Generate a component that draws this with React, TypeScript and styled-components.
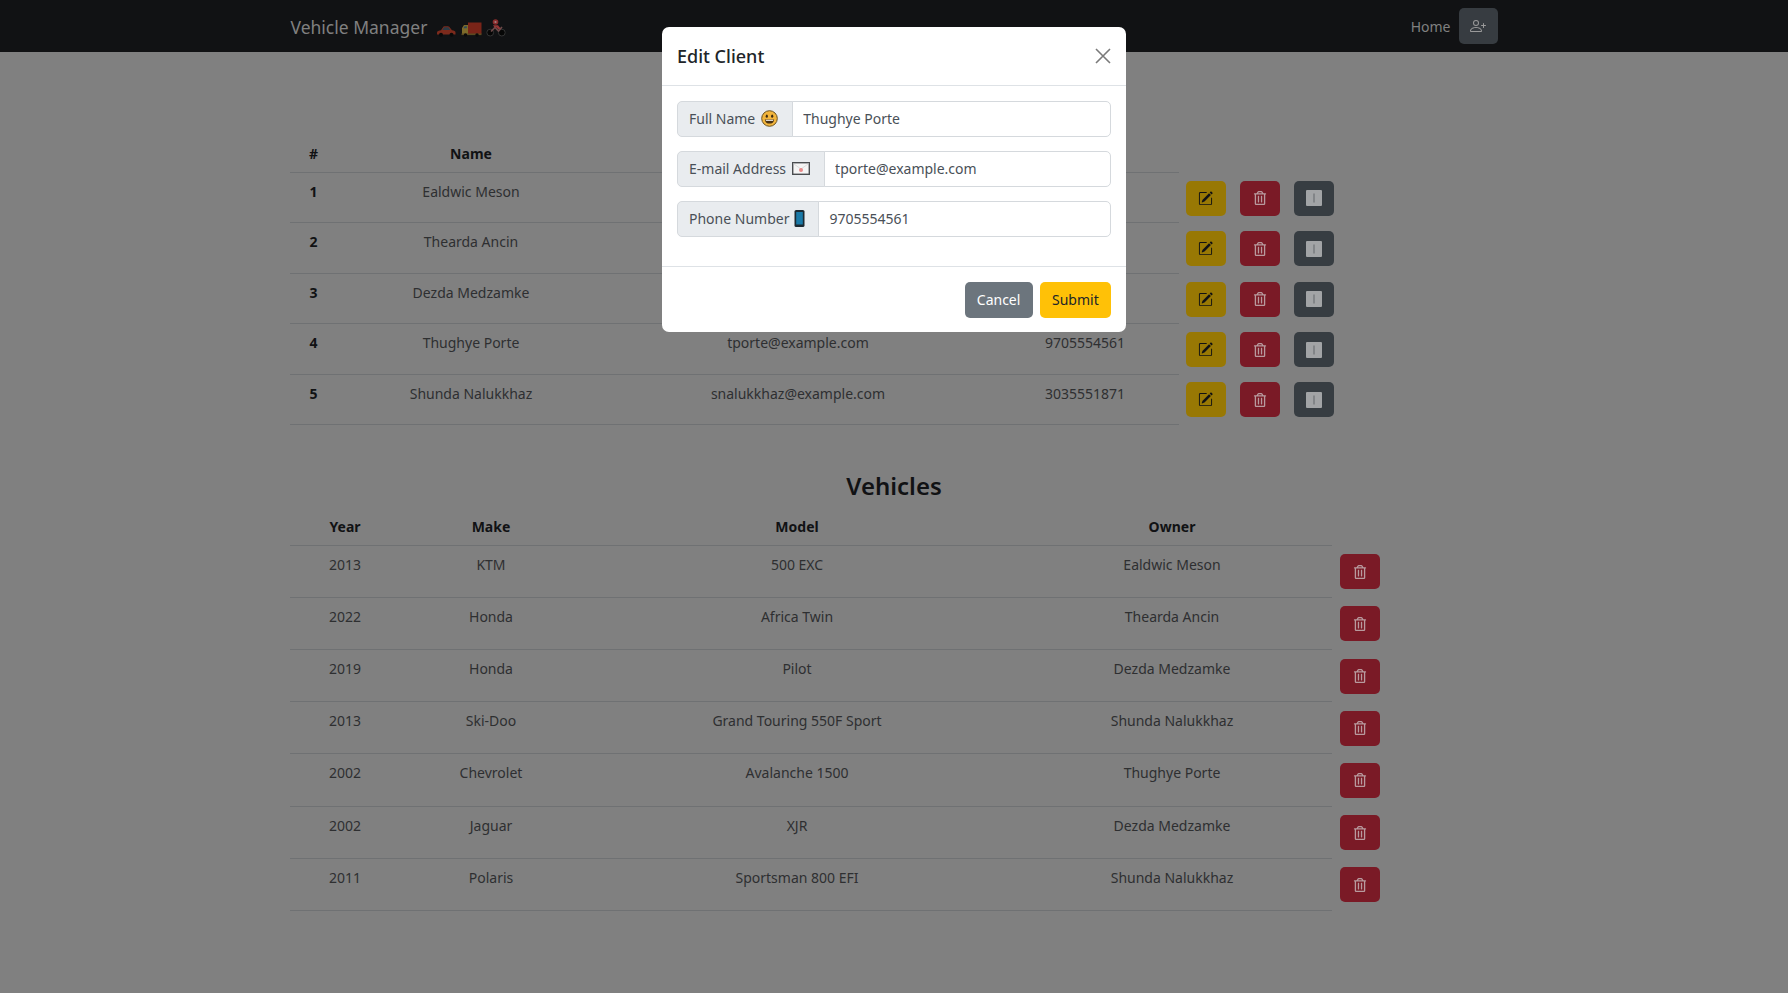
import { createGlobalStyle } from "styled-components"
import styled from "styled-components"
import { BsPencilSquare, BsPersonPlus } from "react-icons/bs"
import { FaRegTrashAlt } from "react-icons/fa"

type Client = { id: number; name: string; email: string; phone: string }
type Vehicle = { year: number; make: string; model: string; owner: string }

const clients: Client[] = [
    { id: 1, name: "Ealdwic Meson", email: "emeson@example.com", phone: "7205550147" },
    { id: 2, name: "Thearda Ancin", email: "tancin@example.com", phone: "3035552284" },
    { id: 3, name: "Dezda Medzamke", email: "dmedzamke@example.com", phone: "7195553390" },
    { id: 4, name: "Thughye Porte", email: "tporte@example.com", phone: "9705554561" },
    { id: 5, name: "Shunda Nalukkhaz", email: "snalukkhaz@example.com", phone: "3035551871" }
]

const vehicles: Vehicle[] = [
    { year: 2013, make: "KTM", model: "500 EXC", owner: "Ealdwic Meson" },
    { year: 2022, make: "Honda", model: "Africa Twin", owner: "Thearda Ancin" },
    { year: 2019, make: "Honda", model: "Pilot", owner: "Dezda Medzamke" },
    { year: 2013, make: "Ski-Doo", model: "Grand Touring 550F Sport", owner: "Shunda Nalukkhaz" },
    { year: 2002, make: "Chevrolet", model: "Avalanche 1500", owner: "Thughye Porte" },
    { year: 2002, make: "Jaguar", model: "XJR", owner: "Dezda Medzamke" },
    { year: 2011, make: "Polaris", model: "Sportsman 800 EFI", owner: "Shunda Nalukkhaz" }
]

const CarEmoji = () => (
    <EmojiSvg width="20" height="12" viewBox="0 0 20 12">
        <path d="M1 7.5C1 6 3 5.5 5 5.2L7.5 1.5C8 1 12 1 13 1.5L16 5.2C18 5.6 19.5 6 19.5 7.5V9.5H1Z" fill="#7c2a1c" />
        <path d="M8 2.2H12.4L14.4 5H6.4Z" fill="#2c3a44" />
        <circle cx="5" cy="9.7" r="2" fill="#0a0a0a" />
        <circle cx="15.5" cy="9.7" r="2" fill="#0a0a0a" />
    </EmojiSvg>
)

const TruckEmoji = () => (
    <EmojiSvg width="21" height="15" viewBox="0 0 21 15">
        <rect x="7" y="0.5" width="13.5" height="11.5" fill="#7a2418" />
        <path d="M1 6L3 3H7V12H1Z" fill="#7d6a2a" />
        <path d="M2.4 6.2L3.6 4.2H5.8V6.2Z" fill="#2f4c5c" />
        <rect x="0.5" y="11.5" width="20" height="1.6" fill="#5a4a20" />
        <circle cx="4.5" cy="13" r="1.7" fill="#0a0a0a" />
        <circle cx="16" cy="13" r="1.7" fill="#0a0a0a" />
    </EmojiSvg>
)

const BikeEmoji = () => (
    <EmojiSvg width="20" height="18" viewBox="0 0 20 18">
        <circle cx="4.2" cy="13.6" r="3.4" fill="#060606" stroke="#343434" strokeWidth="1" />
        <circle cx="15.8" cy="13.6" r="3.4" fill="#060606" stroke="#343434" strokeWidth="1" />
        <path d="M5 12.5L9 8.5L12.5 12L16 8" fill="none" stroke="#6e4a4a" strokeWidth="1.6" />
        <circle cx="9.5" cy="3" r="2.8" fill="#8a2c2c" />
        <circle cx="9.5" cy="3" r="1.1" fill="#a08080" />
        <path d="M7 6.2H12L14.6 9.6L12.4 10.4L10.6 8.4H8.6Z" fill="#963636" />
    </EmojiSvg>
)

const SmileEmoji = () => (
    <EmojiSvg width="17" height="17" viewBox="0 0 17 17">
        <circle cx="8.5" cy="8.5" r="7.8" fill="#f2b53c" stroke="#6b5320" strokeWidth="1" />
        <ellipse cx="5.8" cy="6.2" rx="1.1" ry="1.6" fill="#3d2c12" />
        <ellipse cx="11.2" cy="6.2" rx="1.1" ry="1.6" fill="#3d2c12" />
        <path d="M3.8 9.4H13.2C13 12.2 11 13.6 8.5 13.6C6 13.6 4 12.2 3.8 9.4Z" fill="#4a3312" />
        <path d="M4.8 9.8H12.2V10.8H4.8Z" fill="#fff" />
    </EmojiSvg>
)

const MailEmoji = () => (
    <EmojiSvg width="18" height="13" viewBox="0 0 18 13">
        <rect x="0.7" y="0.7" width="16.6" height="11.6" fill="#f4f4f4" stroke="#4a4d50" strokeWidth="1.4" />
        <path d="M1.4 1.6L9 7L16.6 1.6" fill="none" stroke="#d6d6d6" strokeWidth="0.8" />
        <circle cx="9" cy="8" r="2" fill="#e88a8a" />
    </EmojiSvg>
)

const PhoneEmoji = () => (
    <PhoneSvg width="11" height="17" viewBox="0 0 11 17">
        <rect x="0.5" y="0" width="10" height="17" rx="1.6" fill="#1c2a33" />
        <rect x="2.2" y="2" width="6.6" height="12.5" fill="#1a7aa8" />
    </PhoneSvg>
)

const PlusSquare = () => (
    <svg width="16" height="16" viewBox="0 0 16 16">
        <rect width="16" height="16" rx="1" fill="#a2a4a6" />
        <path d="M8 3.5V12.5" stroke="#63666a" strokeWidth="1" />
    </svg>
)

export default function App() {
    return (
        <>
            <GlobalStyle />
            <Navbar>
                <NavInner>
                    <Brand>
                        Vehicle Manager
                        <EmojiRow>
                            <CarEmoji />
                            <TruckEmoji />
                            <BikeEmoji />
                        </EmojiRow>
                    </Brand>
                    <NavEnd>
                        <NavLink>Home</NavLink>
                        <NavButton aria-label="Add client">
                            <BsPersonPlus size={16} />
                        </NavButton>
                    </NavEnd>
                </NavInner>
            </Navbar>

            <Page>
                <ClientsTable>
                    <colgroup>
                        <col width="47" />
                        <col width="268" />
                        <col width="386" />
                        <col width="188" />
                    </colgroup>
                    <thead>
                        <tr>
                            <Th>#</Th>
                            <Th>Name</Th>
                            <Th>E-mail</Th>
                            <Th>Phone</Th>
                        </tr>
                    </thead>
                    <tbody>
                        {clients.map((c) => (
                            <tr key={`client-${c.id}`}>
                                <IdCell>{c.id}</IdCell>
                                <Td>{c.name}</Td>
                                <Td>{c.email}</Td>
                                <Td>{c.phone}</Td>
                                <ActionCell $left={7} $top={1}>
                                    <ActionGroup>
                                        <IconButton $kind="warning" aria-label="Edit">
                                            <BsPencilSquare size={15} />
                                        </IconButton>
                                        <IconButton $kind="danger" aria-label="Delete">
                                            <FaRegTrashAlt size={14} />
                                        </IconButton>
                                        <IconButton $kind="dark" aria-label="Add vehicle">
                                            <PlusSquare />
                                        </IconButton>
                                    </ActionGroup>
                                </ActionCell>
                            </tr>
                        ))}
                    </tbody>
                </ClientsTable>

                <Title>Vehicles</Title>

                <VehiclesTable>
                    <colgroup>
                        <col width="110" />
                        <col width="182" />
                        <col width="430" />
                        <col width="320" />
                    </colgroup>
                    <thead>
                        <tr>
                            <Th>Year</Th>
                            <Th>Make</Th>
                            <Th>Model</Th>
                            <Th>Owner</Th>
                        </tr>
                    </thead>
                    <tbody>
                        {vehicles.map((v) => (
                            <tr key={`vehicle-${v.model}`}>
                                <Td>{v.year}</Td>
                                <Td>{v.make}</Td>
                                <Td>{v.model}</Td>
                                <Td>{v.owner}</Td>
                                <ActionCell $left={8} $top={1}>
                                    <IconButton $kind="danger" aria-label="Delete">
                                        <FaRegTrashAlt size={14} />
                                    </IconButton>
                                </ActionCell>
                            </tr>
                        ))}
                    </tbody>
                </VehiclesTable>
            </Page>

            <Modal>
                <ModalHeader>
                    <ModalTitle>Edit Client</ModalTitle>
                    <CloseButton aria-label="Close">
                        <svg width="16" height="16" viewBox="0 0 16 16">
                            <path d="M1 1L15 15M15 1L1 15" stroke="#7a7a7a" strokeWidth="1.6" />
                        </svg>
                    </CloseButton>
                </ModalHeader>
                <ModalBody>
                    <InputGroup>
                        <InputLabel>
                            Full Name <SmileEmoji />
                        </InputLabel>
                        <Input defaultValue="Thughye Porte" />
                    </InputGroup>
                    <InputGroup>
                        <InputLabel>
                            E-mail Address <MailEmoji />
                        </InputLabel>
                        <Input defaultValue="tporte@example.com" />
                    </InputGroup>
                    <InputGroup>
                        <InputLabel>
                            Phone Number <PhoneEmoji />
                        </InputLabel>
                        <Input defaultValue="9705554561" />
                    </InputGroup>
                </ModalBody>
                <ModalFooter>
                    <FooterButton $kind="secondary">Cancel</FooterButton>
                    <FooterButton $kind="warning">Submit</FooterButton>
                </ModalFooter>
            </Modal>
        </>
    )
}

const GlobalStyle = createGlobalStyle`
    * {
        box-sizing: border-box;
    }

    body {
        margin: 0;
        background-color: #808080;
        color: #111214;
        font-family: "Noto Sans", "Open Sans", sans-serif;
        font-size: 14px;
        line-height: 22px;
    }
`

const Navbar = styled.nav`
    height: 52px;
    background-color: #111214;
`

const NavInner = styled.div`
    display: flex;
    align-items: center;
    justify-content: space-between;
    width: 1207px;
    height: 100%;
    margin: 0 auto;
`

const Brand = styled.a`
    display: flex;
    align-items: center;
    gap: 9px;
    padding-top: 1px;
    color: #808080;
    font-size: 17.5px;
`

const EmojiRow = styled.span`
    display: flex;
    align-items: flex-end;
    gap: 4.5px;
    margin-top: 3px;
`

const EmojiSvg = styled.svg`
    flex: none;
`

const PhoneSvg = styled(EmojiSvg)`
    margin: 0 -1px;
`

const NavEnd = styled.div`
    display: flex;
    align-items: center;
    gap: 8px;
`

const NavLink = styled.a`
    padding-top: 1px;
    color: #808080;
`

const NavButton = styled.button`
    display: flex;
    align-items: center;
    justify-content: center;
    width: 39px;
    height: 36px;
    padding: 0;
    border: 0;
    border-radius: 5px;
    background-color: #373c41;
    color: #9a9a9a;
`

const Page = styled.main`
    width: 1208px;
    margin: 0 auto;
    padding-top: 84px;
`

const Table = styled.table`
    border-collapse: collapse;
    table-layout: fixed;
    text-align: center;
`

const ClientsTable = styled(Table)`
    width: 1044px;

    tbody tr {
        height: 50.45px;
    }
`

const VehiclesTable = styled(Table)`
    width: 1090px;

    tbody tr {
        height: 52.2px;
    }
`

const Th = styled.th`
    padding: 7px;
    border-bottom: 1px solid #6f7173;
    color: #111214;
    font-weight: 700;
    vertical-align: top;
`

const Td = styled.td`
    padding: 8px 7px;
    border-bottom: 1px solid #6f7173;
    color: #2e2f31;
    vertical-align: top;
`

const IdCell = styled(Td)`
    color: #111214;
    font-weight: 700;
`

const ActionCell = styled.td<{ $left: number; $top: number }>`
    padding: ${({ $top }) => $top}px 0 0 ${({ $left }) => $left}px;
    vertical-align: middle;
    text-align: left;
`

const ActionGroup = styled.div`
    display: flex;
    gap: 14.5px;
`

const kindColors = {
    warning: { bg: "#987804", fg: "#111214" },
    danger: { bg: "#7a1a26", fg: "#b89a9e" },
    dark: { bg: "#373d42", fg: "#b0b0b0" }
}

const IconButton = styled.button<{ $kind: keyof typeof kindColors }>`
    display: flex;
    align-items: center;
    justify-content: center;
    width: 39.5px;
    height: 35px;
    padding: 0;
    border: 0;
    border-radius: 5px;
    background-color: ${({ $kind }) => kindColors[$kind].bg};
    color: ${({ $kind }) => kindColors[$kind].fg};
`

const Title = styled.h2`
    margin: 43px 0 4.4px;
    color: #111214;
    font-size: 24px;
    font-weight: 600;
    line-height: 36px;
    text-align: center;
`

const Modal = styled.div`
    position: fixed;
    top: 27px;
    left: 662px;
    width: 464px;
    height: 305px;
    border-radius: 7px;
    background-color: #fff;
    color: #212529;
`

const ModalHeader = styled.header`
    display: flex;
    align-items: center;
    justify-content: space-between;
    height: 59px;
    padding: 0 15px;
    border-bottom: 1px solid #dee2e6;
`

const ModalTitle = styled.h5`
    margin: 0;
    font-size: 18px;
    font-weight: 500;
`

const CloseButton = styled.button`
    display: flex;
    padding: 0;
    border: 0;
    background: none;
`

const ModalBody = styled.div`
    display: flex;
    flex-direction: column;
    gap: 14.5px;
    height: 181px;
    padding: 15px;
    border-bottom: 1px solid #dee2e6;
`

const InputGroup = styled.div`
    display: flex;
    height: 35.5px;
`

const InputLabel = styled.span`
    display: flex;
    align-items: center;
    gap: 6px;
    padding: 0 13.5px 0 11px;
    border: 1px solid #d5d9dd;
    border-radius: 5px 0 0 5px;
    background-color: #e9ecef;
    color: #495057;
    white-space: nowrap;
`

const Input = styled.input`
    flex: 1;
    min-width: 0;
    margin-left: -1px;
    padding: 0 10.5px;
    border: 1px solid #d5d9dd;
    border-radius: 0 5px 5px 0;
    background-color: #fff;
    color: #495057;
    font: inherit;
`

const ModalFooter = styled.footer`
    display: flex;
    justify-content: flex-end;
    gap: 7px;
    padding: 15px;
`

const FooterButton = styled.button<{ $kind: "secondary" | "warning" }>`
    height: 36px;
    padding: 0 12.3px;
    border: 0;
    border-radius: 5px;
    background-color: ${({ $kind }) => ($kind === "warning" ? "#ffc107" : "#6c757d")};
    color: ${({ $kind }) => ($kind === "warning" ? "#212529" : "#fff")};
    font: inherit;
`
